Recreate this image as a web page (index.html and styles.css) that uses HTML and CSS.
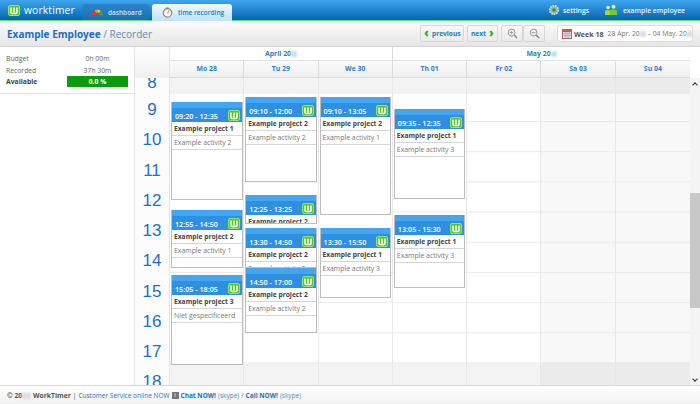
FILE: index.html
```html
<!DOCTYPE html>
<html lang="en">
<head>
<meta charset="utf-8">
<title>WorkTimer</title>
<link rel="stylesheet" href="styles.css">
</head>
<body>
<svg class="defs" width="0" height="0" aria-hidden="true">
  <symbol id="logo" viewBox="0 0 12 11">
    <rect x=".5" y=".5" width="11" height="10" rx="1.5" fill="#58c22c" stroke="#8fe86a"/>
    <path d="M3 2.5V7.5Q3 8.5 4 8.5H8Q9 8.5 9 7.5V2.5M6 2.5V7.5" fill="none" stroke="#fff" stroke-width="1.5"/>
  </symbol>
</svg>
<header class="topbar">
  <div class="brand"><svg class="brand-logo"><use href="#logo"/></svg><span>worktimer</span></div>
  <nav class="tabs">
    <a class="tab">
      <svg class="tab-icon" viewBox="0 2 14 8"><path d="M1 9A6 6 0 0 1 4 3.4L5.5 6.5A2.5 2.5 0 0 0 4.5 9Z" fill="#e33"/><path d="M4 3.4A6 6 0 0 1 7 3V6A2.5 2.5 0 0 0 5.5 6.5Z" fill="#f90"/><path d="M7 3A6 6 0 0 1 10.5 4L8.7 6.5A2.5 2.5 0 0 0 7 6Z" fill="#ec3"/><path d="M10.5 4A6 6 0 0 1 13 9H9.5A2.5 2.5 0 0 0 8.7 6.5Z" fill="#3a4"/></svg>
      <span>dashboard</span>
    </a>
    <a class="tab tab-active">
      <svg class="tab-icon" viewBox="0 0 13 13"><circle cx="6.5" cy="7" r="5" fill="#f6f3e8" stroke="#8d8672" stroke-width="1.4"/><rect x="5" y=".5" width="3" height="1.6" fill="#8d8672"/><path d="M6.5 7.5L8.6 4" stroke="#c76a2a" stroke-width="1"/></svg>
      <span>time recording</span>
    </a>
  </nav>
  <div class="top-links">
    <a class="top-link">
      <svg class="top-icon" viewBox="0 0 12 12"><circle cx="6" cy="6" r="4.3" fill="#8fb9a8" stroke="#d7e6dc" stroke-width="1.6" stroke-dasharray="1.6 1"/><circle cx="6" cy="6" r="1.8" fill="#4a8c3c"/></svg>
      <span>settings</span>
    </a>
    <a class="top-link top-user">
      <svg class="top-icon" viewBox="0 0 12 12"><circle cx="3" cy="3.5" r="1.8" fill="#eff37a"/><circle cx="8.5" cy="2.8" r="2" fill="#eff37a"/><path d="M0 11V7.5Q0 6 2 6H4Q5 6 5 8V11Z" fill="#a6d83c"/><path d="M5 11V7Q5 5.4 7 5.4H10Q12 5.4 12 7V11Z" fill="#7cc52c"/></svg>
      <span>example employee</span>
    </a>
  </div>
</header>

<section class="titlebar">
  <h1 class="title"><b>Example Employee</b> / Recorder</h1>
  <div class="tools">
    <a class="btn btn-prev"><i class="chev">‹</i> previous</a>
    <a class="btn btn-next">next <i class="chev">›</i></a>
    <a class="btn btn-icon btn-zoom"><svg viewBox="0 0 12 12"><circle cx="5" cy="5" r="3.6" fill="none" stroke="#999" stroke-width="1.1"/><path d="M8 8L11 11" stroke="#888" stroke-width="1.6"/><path d="M3.2 5H6.8M5 3.2V6.8" stroke="#999"/></svg></a>
    <a class="btn btn-icon"><svg viewBox="0 0 12 12"><circle cx="5" cy="5" r="3.6" fill="none" stroke="#999" stroke-width="1.1"/><path d="M8 8L11 11" stroke="#888" stroke-width="1.6"/><path d="M3.2 5H6.8" stroke="#999"/></svg></a>
    <div class="weekbox">
      <svg class="cal-icon" viewBox="0 0 11 11"><rect x=".5" y=".5" width="10" height="10" fill="#e9eef5" stroke="#a55"/><rect x="1" y="1" width="9" height="2.4" fill="#d5583c"/><path d="M1 5.2H10M1 7.4H10M3.4 3.4V10M5.6 3.4V10M7.8 3.4V10" stroke="#7d8fb5" stroke-width=".6"/></svg>
      <b>Week 18</b>
      <span class="week-dates">28 Apr. 20<i class="blur"></i> – 04 May. 20<i class="blur"></i></span>
    </div>
  </div>
</section>

<main class="main">
  <aside class="side">
    <dl class="stats">
      <div class="stat"><dt>Budget</dt><dd>0h 00m</dd></div>
      <div class="stat"><dt>Recorded</dt><dd>37h 30m</dd></div>
      <div class="stat stat-strong"><dt>Available</dt><dd class="bar">0.0 %</dd></div>
    </dl>
  </aside>
  <div class="hours">
    <div class="hours-head"></div>
    <div class="hours-clip">
      <ol class="hour-list">
        <li class="hour-first">8</li><li>9</li><li>10</li><li>11</li><li>12</li><li>13</li><li>14</li><li>15</li><li>16</li><li>17</li><li>18</li>
      </ol>
    </div>
  </div>
  <div class="calendar">
    <div class="months">
      <div class="month month-apr">April 20<i class="blur blur-blue"></i></div>
      <div class="month month-may">May 20<i class="blur blur-blue"></i></div>
    </div>
    <div class="dayheads">
      <div>Mo 28</div><div>Tu 29</div><div>We 30</div><div>Th 01</div><div>Fr 02</div><div>Sa 03</div><div>Su 04</div>
    </div>
    <div class="grid">
      <div class="day">
        <div class="off"></div><div class="work"></div><div class="off"></div>
        <article class="event" style="top:24px;height:98px"><div class="event-head"><span>09:20 - 12:35</span><svg class="event-logo"><use href="#logo"/></svg></div><div class="event-row event-project">Example project 1</div><div class="event-row">Example activity 2</div></article>
        <article class="event" style="top:132px;height:58px"><div class="event-head"><span>12:55 - 14:50</span><svg class="event-logo"><use href="#logo"/></svg></div><div class="event-row event-project">Example project 2</div><div class="event-row">Example activity 1</div></article>
        <article class="event" style="top:197px;height:90px"><div class="event-head"><span>15:05 - 18:05</span><svg class="event-logo"><use href="#logo"/></svg></div><div class="event-row event-project">Example project 3</div><div class="event-row">Niet gespecificeerd</div></article>
      </div>
      <div class="day">
        <div class="off"></div><div class="work"></div><div class="off"></div>
        <article class="event" style="top:19px;height:85px"><div class="event-head"><span>09:10 - 12:00</span><svg class="event-logo"><use href="#logo"/></svg></div><div class="event-row event-project">Example project 2</div><div class="event-row">Example activity 2</div></article>
        <article class="event" style="top:117px;height:29px"><div class="event-head"><span>12:25 - 13:25</span><svg class="event-logo"><use href="#logo"/></svg></div><div class="event-row event-project">Example project 2</div><div class="event-row">Example activity 2</div></article>
        <article class="event" style="top:150px;height:40px"><div class="event-head"><span>13:30 - 14:50</span><svg class="event-logo"><use href="#logo"/></svg></div><div class="event-row event-project">Example project 2</div><div class="event-row">Example activity 2</div></article>
        <article class="event" style="top:190px;height:65px"><div class="event-head"><span>14:50 - 17:00</span><svg class="event-logo"><use href="#logo"/></svg></div><div class="event-row event-project">Example project 2</div><div class="event-row">Example activity 2</div></article>
      </div>
      <div class="day">
        <div class="off"></div><div class="work"></div><div class="off"></div>
        <article class="event" style="top:19px;height:118px"><div class="event-head"><span>09:10 - 13:05</span><svg class="event-logo"><use href="#logo"/></svg></div><div class="event-row event-project">Example project 2</div><div class="event-row">Example activity 1</div></article>
        <article class="event" style="top:150px;height:70px"><div class="event-head"><span>13:30 - 15:50</span><svg class="event-logo"><use href="#logo"/></svg></div><div class="event-row event-project">Example project 1</div><div class="event-row">Example activity 3</div></article>
      </div>
      <div class="day">
        <div class="off"></div><div class="work"></div><div class="off"></div>
        <article class="event" style="top:31px;height:90px"><div class="event-head"><span>09:35 - 12:35</span><svg class="event-logo"><use href="#logo"/></svg></div><div class="event-row event-project">Example project 1</div><div class="event-row">Example activity 3</div></article>
        <article class="event" style="top:137px;height:73px"><div class="event-head"><span>13:05 - 15:30</span><svg class="event-logo"><use href="#logo"/></svg></div><div class="event-row event-project">Example project 1</div><div class="event-row">Example activity 3</div></article>
      </div>
      <div class="day">
        <div class="off"></div><div class="work"></div><div class="off"></div>
      </div>
      <div class="day day-weekend">
        <div class="off"></div><div class="work"></div><div class="off"></div>
      </div>
      <div class="day day-weekend">
        <div class="off"></div><div class="work"></div><div class="off"></div>
      </div>
    </div>
  </div>
  <div class="scrollbar">
    <div class="scroll-head"></div>
    <div class="scroll-track">
      <span class="arrow arrow-up"></span>
      <div class="thumb"></div>
      <span class="arrow arrow-down"></span>
    </div>
  </div>
</main>

<footer class="footer">
  <b>© 20<i class="blur"></i> WorkTimer</b> <span class="sep">|</span>
  <a>Customer Service online NOW</a>
  <span class="info">i</span>
  <a><b>Chat NOW!</b></a> <a class="skype">(skype)</a> <a class="skype">/</a> <a><b>Call NOW!</b></a> <a class="skype">(skype)</a>
</footer>
</body>
</html>
```
FILE: styles.css
```css
* { box-sizing: border-box; }
html, body { margin: 0; padding: 0; }
body {
  width: 700px;
  height: 404px;
  overflow: hidden;
  display: flex;
  flex-direction: column;
  font-family: "Open Sans", "Liberation Sans", sans-serif;
  font-size: 7px;
  color: #555;
  background: #fff;
}
i { font-style: normal; }
.defs { position: absolute; }

.topbar {
  height: 21px;
  flex: none;
  display: flex;
  align-items: flex-end;
  background: linear-gradient(#3ea5ee, #0b6bb8 90%, #0560aa);
  border-bottom: 1px solid #6fdc6f;
  color: #fff;
}
.brand {
  width: 82px;
  height: 20px;
  display: flex;
  align-items: center;
  gap: 4px;
  padding-left: 8px;
  font-size: 10.2px;
  letter-spacing: .2px;
}
.brand-logo { width: 12px; height: 11px; flex: none; }
.tabs { display: flex; gap: 3px; align-items: flex-end; }
.tab {
  width: 67px;
  height: 16px;
  display: flex;
  align-items: center;
  gap: 4px;
  padding-left: 9px;
  font-size: 6.5px;
  font-weight: 600;
  white-space: nowrap;
  color: #cfe6f8;
  background: linear-gradient(#2d82c8, #1b6fb6);
  border-radius: 3px 3px 0 0;
}
.tab-icon { width: 13px; height: 11px; flex: none; }
.tab-active {
  width: 80px;
  height: 17px;
  margin-bottom: -1px;
  padding-left: 9px;
  gap: 4px;
  color: #1a78c6;
  background: linear-gradient(#f0f8fe, #bfe3fb);
}
.top-links { margin-left: auto; display: flex; align-items: center; height: 20px; padding-right: 15px; }
.top-link { display: flex; align-items: center; gap: 3px; font-size: 6.8px; font-weight: 600; color: #eef7fd; }
.top-icon { width: 12px; height: 12px; flex: none; }
.top-user { margin-left: 16px; gap: 6px; }

.titlebar {
  height: 26px;
  flex: none;
  display: flex;
  align-items: center;
  justify-content: space-between;
  padding: 0 7px;
  background: linear-gradient(#fbfbfb, #e6e6e6);
  border-bottom: 1px solid #d4d4d4;
}
.title { margin: 0; font-size: 10px; font-weight: 400; color: #5b8fb8; }
.title b { color: #1a70bf; font-weight: 700; }
.tools { display: flex; align-items: center; gap: 3px; }
.btn {
  height: 17px;
  display: flex;
  align-items: center;
  gap: 3px;
  font-size: 6.6px;
  font-weight: 700;
  color: #1e7ac6;
  background: linear-gradient(#f8f8f8, #eaeaea);
  border: 1px solid #d6d6d6;
  border-radius: 2px;
}
.btn-prev { width: 44px; padding-left: 3px; }
.btn-next { width: 31px; padding-left: 3px; }
.chev { width: 5px; text-align: center; font-size: 12px; font-weight: 800; color: #22b02a; line-height: 12px; margin-top: -2px; }
.btn-icon { width: 22px; justify-content: center; }
.btn-icon svg { width: 11px; height: 11px; }
.btn-zoom { margin-right: -3px; }
.weekbox {
  height: 17px;
  width: 136px;
  margin-left: 9px;
  display: flex;
  align-items: center;
  gap: 2px;
  padding-left: 4px;
  background: #fff;
  border: 1px solid #dcdcdc;
  border-radius: 3px;
  font-size: 7.1px;
  white-space: nowrap;
}
.weekbox b { color: #555; }
.cal-icon { width: 10px; height: 10px; flex: none; }
.week-dates { font-size: 6.8px; color: #777; margin-left: 2px; }
.blur { display: inline-block; width: 6px; height: 6px; background: #ddd; vertical-align: -1px; filter: blur(.8px); }
.blur-blue { background: #c6def2; }

.main { flex: 1; display: flex; min-height: 0; }
.side { width: 135px; flex: none; border-right: 1px solid #e4e4e4; background: #fff; }
.stats { margin: 0; height: 47px; padding: 6px 0 0; border-bottom: 1px solid #e4e4e4; }
.stat { display: flex; height: 11.5px; align-items: center; padding-left: 6px; font-size: 6.8px; color: #666; }
.stat dt { width: 61px; }
.stat dd { margin: 0; width: 61px; text-align: center; }
.stat-strong dt { font-weight: 700; color: #444; }
.bar { height: 11px; line-height: 11px; background: #0b9c0b; color: #fff; font-weight: 700; }

.hours { width: 35px; flex: none; display: flex; flex-direction: column; border-right: 1px solid #e4e4e4; background: #fcfcfc; }
.hours-head { height: 31px; flex: none; background: linear-gradient(#fff, #efefef); }
.hours-clip { flex: 1; overflow: hidden; }
.hour-list {
  list-style: none;
  margin: -10px 0 0;
  padding: 0;
  font-family: "Liberation Sans", sans-serif;
  font-size: 17px;
  color: #1b72c2;
  text-align: center;
}
.hour-list li { height: 30.25px; line-height: 30px; }
.hour-list .hour-first { height: 27px; }

.calendar { width: 520px; flex: none; display: flex; flex-direction: column; }
.months { height: 14px; flex: none; display: flex; border-bottom: 1px solid #e2e2e2; background: #fff; }
.month { text-align: center; line-height: 14px; font-size: 6.9px; font-weight: 700; color: #2a7fc8; }
.month-apr { width: 223px; border-right: 1px solid #dcdcdc; }
.month-may { flex: 1; }
.dayheads {
  height: 17px;
  flex: none;
  display: grid;
  grid-template-columns: repeat(7, 1fr);
  background: linear-gradient(#fbfbfb, #efefef);
  border-bottom: 1px solid #dcdcdc;
}
.dayheads div { text-align: center; line-height: 16px; font-size: 6.9px; font-weight: 700; color: #2a7fc8; border-right: 1px solid #dcdcdc; }
.dayheads div:last-child { border-right: 0; }
.grid { flex: 1; min-height: 0; display: grid; grid-template-columns: repeat(7, 1fr); overflow: hidden; }
.day { position: relative; display: flex; flex-direction: column; min-width: 0; border-right: 1px solid #e8e8e8; background: #fff; }
.day:last-child { border-right: 0; }
.off { height: 16px; flex: none; background: #f3f3f3; }
.off:last-of-type { height: 23px; }
.work {
  flex: 1;
  background-image: linear-gradient(#e9e9e9 1px, transparent 1px);
  background-size: 100% 30.2px;
  background-position: 0 27px;
}
.day-weekend { background: #f8f8f8; }
.day-weekend .off { background: #ebebeb; }

.event {
  position: absolute;
  left: 1px;
  width: 71.5px;
  overflow: hidden;
  background: #fff;
  border: 1px solid #bdbdbd;
  border-top: 0;
}
.event-head {
  height: 20px;
  padding: 7px 2px 0 3px;
  display: flex;
  align-items: center;
  justify-content: space-between;
  font-size: 7.2px;
  font-weight: 600;
  color: #fff;
  background: linear-gradient(#45a6ee 6px, #2f8fe0 6px);
}
.event-logo { width: 12px; height: 11px; flex: none; margin-top: -1px; }
.event-row { height: 14px; line-height: 13px; padding-left: 2px; font-size: 6.9px; color: #777; border-bottom: 1px solid #d6d6d6; white-space: nowrap; }
.event-project { font-size: 6.7px; font-weight: 700; color: #444; }

.scrollbar { flex: 1; display: flex; flex-direction: column; }
.scroll-head { height: 31px; flex: none; background: #fff; }
.scroll-track { flex: 1; position: relative; background: #f4f4f4; }
.thumb { position: absolute; top: 115px; left: 0; right: 0; height: 115px; background: #c8c8c8; }
.arrow { position: absolute; left: 3px; width: 4px; height: 4px; border-left: 1px solid #333; border-top: 1px solid #333; transform: rotate(45deg); }
.arrow-up { top: 5px; }
.arrow-down { bottom: 4px; transform: rotate(225deg); }

.footer {
  height: 19px;
  flex: none;
  display: flex;
  align-items: center;
  gap: 2px;
  padding-left: 7px;
  font-size: 6.5px;
  color: #1e7ac6;
  background: linear-gradient(#fff, #f1f1f1);
  border-top: 1px solid #d8d8d8;
  white-space: nowrap;
}
.footer > b { font-size: 6.8px; color: #555; }
.footer .blur { width: 9px; }
.sep { color: #555; }
.footer a b { color: #1a70bf; }
.skype { color: #5a8db8; }
.info { width: 7px; height: 7px; line-height: 7px; text-align: center; background: #777; color: #fff; font-size: 6px; }
```
